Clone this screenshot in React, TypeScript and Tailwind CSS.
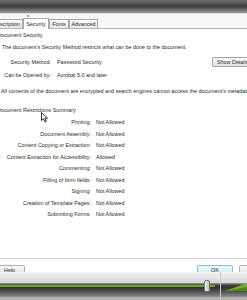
const rows: [string, string][] = [
  ["Printing:", "Not Allowed"],
  ["Document Assembly:", "Not Allowed"],
  ["Content Copying or Extraction:", "Not Allowed"],
  ["Content Extraction for Accessibility:", "Allowed"],
  ["Commenting:", "Not Allowed"],
  ["Filling of form fields:", "Not Allowed"],
  ["Signing:", "Not Allowed"],
  ["Creation of Template Pages:", "Not Allowed"],
  ["Submitting Forms:", "Not Allowed"],
];

function Tab({ label, active, className }: { label: string; active?: boolean; className: string }) {
  return (
    <div
      className={`flex items-center justify-center border border-b-0 border-[#a9a9a9] ${
        active ? "h-[11px] bg-white -mb-px relative z-10" : "h-[9px] bg-linear-to-b from-[#fbfbfb] to-[#e9e9e9]"
      } ${className}`}
    >
      {label}
    </div>
  );
}

export default function App() {
  return (
    <div className="relative w-[247px] h-[300px] overflow-hidden bg-white flex flex-col text-[#2b2b2b] text-[5.4px] leading-[8px] font-['Liberation_Sans',Arial,sans-serif]">
      {/* window title strip */}
      <div className="h-[13px] bg-linear-to-b from-[#6e6e6e] via-[#404040] to-[#9c9c9c]" />
      <div className="h-px bg-[#cfe0ef]" />

      {/* tab strip */}
      <div className="relative h-[14px] bg-[#f6f6f6] flex items-end">
        <div className="absolute left-[27px] top-[1px] w-[2px] h-[2px] rounded-full bg-[#8a8a8a]" />
        <Tab label="Description" className="w-[36px] ml-[-13px] justify-end pr-[2px]" />
        <Tab label="Security" active className="w-[26px]" />
        <Tab label="Fonts" className="w-[20px]" />
        <Tab label="Advanced" className="w-[29px]" />
      </div>

      {/* dialog body */}
      <div className="flex-1 flex flex-col border-t border-[#b4b4b4]">
        <div className="mt-[2px] ml-[-3px]">Document Security</div>
        <div className="mt-[4px] ml-[2px] whitespace-nowrap">
          The document's Security Method restricts what can be done to the document.
        </div>
        <div className="mt-[6px] h-[10px] flex items-center">
          <div className="w-[51px] text-right">Security Method:</div>
          <div className="ml-[6px]">Password Security</div>
          <div className="ml-auto mr-[-14px] h-[10px] w-[49px] flex items-center pl-[4px] whitespace-nowrap rounded-[2px] border border-[#a6a6a6] bg-linear-to-b from-[#fafafa] to-[#e2e2e2]">
            Show Details...
          </div>
        </div>
        <div className="mt-[4px] flex">
          <div className="w-[51px] text-right whitespace-nowrap">Can be Opened by:</div>
          <div className="ml-[6px]">Acrobat 5.0 and later</div>
        </div>
        <div className="mt-[8px] ml-[1px] whitespace-nowrap">
          All contents of the document are encrypted and search engines cannot access the document's metadata.
        </div>
        <div className="mt-[11px] ml-[-3px]">Document Restrictions Summary</div>
        <div className="mt-[4px] grid grid-cols-[91px_1fr] gap-y-[3.5px] gap-x-[5px]">
          {rows.map(([k, v]) => (
            <div key={k} className="contents">
              <div className="text-right whitespace-nowrap">{k}</div>
              <div>{v}</div>
            </div>
          ))}
        </div>
      </div>

      {/* button row */}
      <div className="h-px bg-[#d4d4d4]" />
      <div className="h-[13px] pt-[6px] flex items-start overflow-hidden">
        <div className="h-[9px] w-[26px] ml-[-1px] pl-[4px] flex items-center border border-[#acacac] rounded-[2px] bg-linear-to-b from-[#fbfbfb] to-[#e6e6e6]">
          Help
        </div>
        <div className="ml-auto h-[9px] w-[36px] flex items-center justify-center border border-[#7fc3e2] rounded-[2px] bg-linear-to-b from-[#eef8fd] to-[#d3edf9]">
          OK
        </div>
        <div className="ml-[6px] mr-[-28px] h-[9px] w-[36px] flex items-center justify-center border border-[#acacac] rounded-[2px] bg-linear-to-b from-[#fbfbfb] to-[#e6e6e6]">
          Cancel
        </div>
      </div>

      {/* video player bar */}
      <div className="relative h-[28px] flex flex-col">
        <div className="h-[11px] bg-linear-to-b from-[#f4f4f4] to-[#d6d6d6]" />
        <div className="h-[2px] bg-linear-to-b from-[#9e9e9e] to-[#4a4a4a]" />
        <div className="h-[2px] flex">
          <div className="w-[215px] bg-[#6aa31e]" />
          <div className="flex-1 bg-[#3a3a3a]" />
        </div>
        <div className="h-[10px] bg-linear-to-b from-[#2e2e2e] via-[#555555] to-[#8c8c8c]" />
        <div className="flex-1 bg-[#b2b2b2]" />
        <div className="absolute left-[220px] top-0 bottom-0 w-px bg-[#c9c9c9]" />
        <div className="absolute left-[204px] top-[8px] w-[6px] h-[12px] rounded-[2px] border border-[#7a7a7a] bg-linear-to-r from-[#f2f2f2] to-[#bdbdbd]" />
        <svg className="absolute left-[225px] top-[10px]" width="22" height="10" viewBox="0 0 22 10">
          <polygon points="0,9 22,1 22,9" fill="#74ad2c" />
          <polygon points="0,9 22,5 22,9" fill="#4f8a16" />
        </svg>
      </div>

      {/* mouse pointer */}
      <svg className="absolute left-[41px] top-[112px]" width="8" height="11" viewBox="0 0 8 11">
        <path d="M0.5 0.5 L0.5 8.5 L2.5 6.7 L4 10 L5.3 9.4 L3.9 6.2 L6.6 6.2 Z" fill="#ffffff" stroke="#000000" strokeWidth="0.8" />
      </svg>
    </div>
  );
}
